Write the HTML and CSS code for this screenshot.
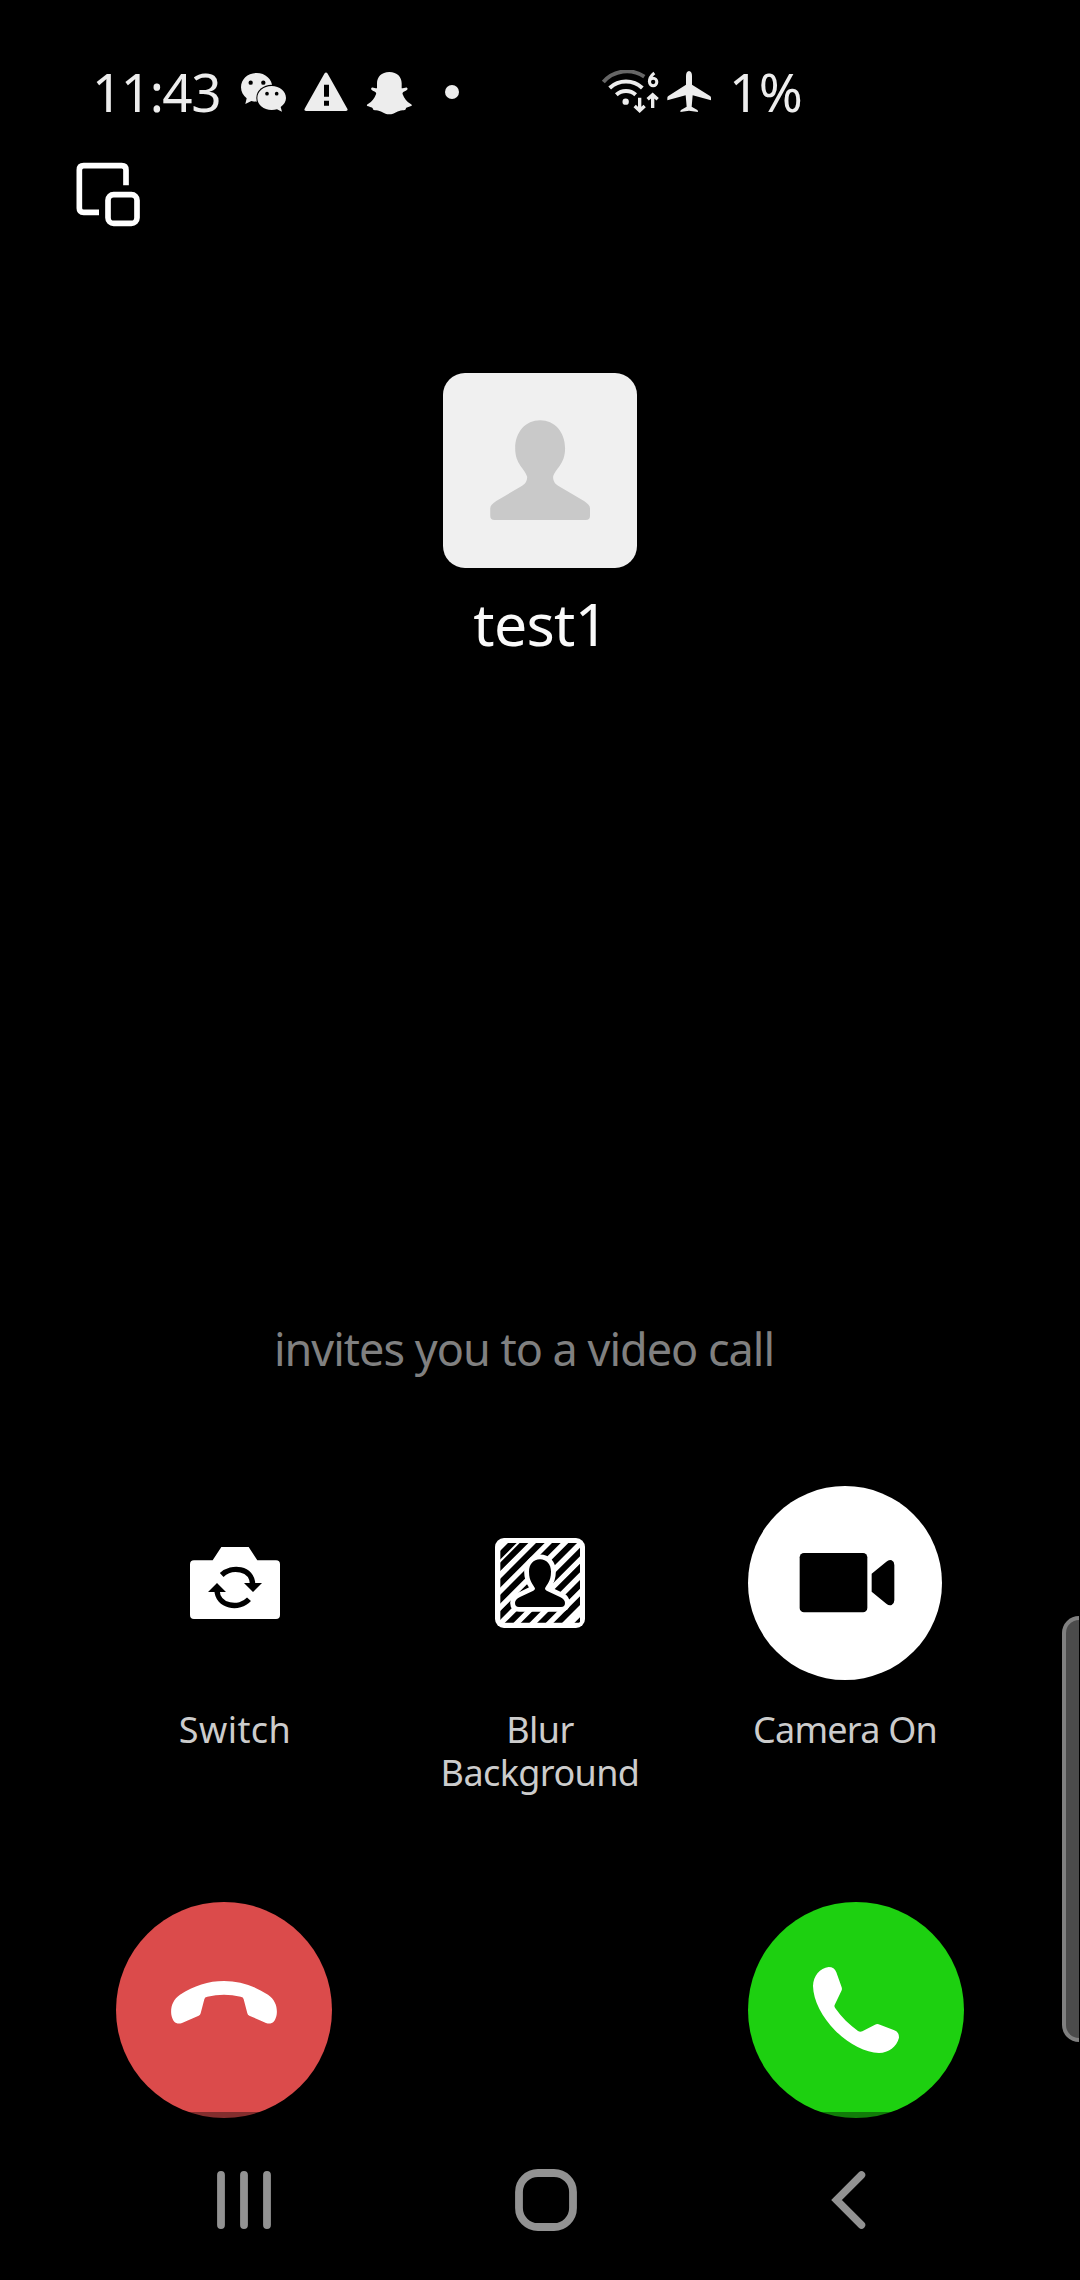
FILE: index.html
```html
<!DOCTYPE html>
<html lang="en">
<head>
<meta charset="utf-8">
<title>Video call</title>
<link rel="stylesheet" href="styles.css">
</head>
<body>
<div class="screen">
  <header class="status">
    <span class="clock">11:43</span>
    <svg class="chat" width="47" height="46" viewBox="540 60 141 138">
      <path fill="#ededed" d="M590 69c-27 0-47 19-47 43 0 14 7 25 17 33l-4 17 18-9c6 2 12 2 19 2 25-1 44-19 44-43s-21-43-47-43z"/>
      <ellipse cx="635" cy="144" rx="46" ry="40" fill="#000"/>
      <path fill="#ededed" d="M635 108c-24 0-43 16-43 36s19 36 43 36c6 0 11-1 16-2l15 7-4-14c10-7 16-16 16-27 0-20-19-36-43-36z"/>
      <g fill="#000"><circle cx="572" cy="98" r="6.500"/><circle cx="610" cy="98" r="6.500"/><circle cx="621" cy="131" r="5.500"/><circle cx="650" cy="131" r="5.500"/></g>
    </svg>
    <svg class="alert" width="44" height="46" viewBox="732 60 132 138">
      <path fill="#ededed" d="M793 71q5-7 10 0l59 105q3 7-4 7H738q-7 0-4-7z"/>
      <path fill="#000" d="M792 104h15v36h-15zM792 152h15v15h-15z"/>
    </svg>
    <svg class="ghost" width="46" height="46" viewBox="918 60 138 138">
      <path fill="#ededed" d="M988 66c-24 0-37 15-37 34v15c-6 0-12-4-16-2-4 4 0 8 5 10 6 2 10 5 8 10-5 13-12 22-23 28-6 3-6 6 0 8 5 3 11 2 13 6 1 4 2 6 7 6 17-2 25 12 43 12s26-14 43-12c5 0 6-2 7-6 2-4 8-3 13-6 6-2 6-5 0-8-11-6-18-15-23-28-2-5 2-8 8-10 5-2 9-6 5-10-4-2-10 2-16 2v-15c0-19-13-34-37-34z"/>
    </svg>
    <span class="more"></span>
    <svg class="wifi" width="58" height="46" viewBox="63 60 174 138">
      <g fill="none" stroke="#ededed" stroke-width="12">
        <path stroke="#666" d="M70 96A94 94 0 0 1 193 80"/>
        <path d="M89 114A72 72 0 0 1 187 114"/>
        <path d="M109 134A43 43 0 0 1 167 134"/>
        <path stroke-width="10" d="M179 143v38M164 168l15 14 15-14M218 174v-39M203 148l15-14 15 14"/>
        <path stroke-width="9" d="M223 69q-15 12-15 27"/>
        <circle cx="219.500" cy="96" r="11" stroke-width="9"/>
      </g>
      <circle cx="137" cy="155" r="9.500" fill="#ededed"/>
    </svg>
    <svg class="plane" width="44" height="46" viewBox="261 60 132 138">
      <path fill="#ededed" d="M327 63c6 0 9 7 9 15v26l54 34q3 2 3 5v8l-55-15-3 34 17 10q2 2 2 6l-27-4-26 4q0-4 2-6l17-10-3-34-55 15v-8q0-3 3-5l53-34V78c0-8 3-15 9-15z"/>
    </svg>
    <span class="battery">1%</span>
  </header>

  <svg class="minimize" width="66" height="66" viewBox="45 336 198 198" fill="none" stroke="#fff" stroke-width="17">
    <path d="M198 406V360Q198 347 185 347H71Q58 347 58 360V475Q58 487 71 487H117"/>
    <rect x="144" y="434" width="87" height="86" rx="17"/>
  </svg>

  <section class="caller">
    <svg class="avatar" viewBox="68 38 585 585">
      <path fill="#c9c9c9" d="M360 180c-43 0-75 35-75 84 0 49 29 60 36 86 0 15-7 22-15 27l-78 46q-18 12-18 22v22q0 13 13 13h274q13 0 13-13v-22q0-10-18-22l-78-46c-8-5-15-12-15-27 7-26 36-37 36-86 0-49-32-84-75-84z"/>
    </svg>
    <span class="name">test1</span>
  </section>

  <p class="invite">invites you to a video call</p>

  <section class="options">
    <div class="option">
      <div class="disc">
        <svg width="90" height="90" viewBox="90 84 270 270">
          <path fill="#fff" d="M102 151h56l26-40h82l26 40h56q12 0 12 12v152q0 12-12 12H102q-12 0-12-12V163q0-12 12-12z"/>
          <path fill="none" stroke="#000" stroke-width="16" d="M185 195C214 167 277 172 278 224M267 268C238 300 172 290 171 240"/>
          <path d="M252 219h54l-27 27zM144 246h54l-27-27z"/>
        </svg>
      </div>
      <span class="label switch">Switch</span>
    </div>
    <div class="option">
      <div class="disc">
        <svg width="90" height="90" viewBox="225 84 270 270">
          <clipPath id="frame"><rect x="241" y="99" width="239" height="239" rx="4"/></clipPath>
          <rect x="225" y="84" width="270" height="270" rx="27" fill="#fff"/>
          <g clip-path="url(#frame)">
            <path stroke="#000" stroke-width="18.500" d="M200 176L400-24M200 211L500-89M200 260L500-40M200 308L500 8M200 357L550 7M200 406L550 56M200 454L550 104M200 503L550 153M200 552L550 202M200 615L550 265"/>
            <path stroke="#fff" stroke-width="29" stroke-linejoin="round" d="M360 148c-20 0-33 15-33 37 0 30 13 38 18 50q0 5-5 7l-40 19q-15 7-15 18 0 12 12 12h126q12 0 12-12 0-11-15-18l-40-19q-5-2-5-7c5-12 18-20 18-50 0-22-13-37-33-37z"/>
            <path d="M360 148c-20 0-33 15-33 37 0 30 13 38 18 50q0 5-5 7l-40 19q-15 7-15 18 0 12 12 12h126q12 0 12-12 0-11-15-18l-40-19q-5-2-5-7c5-12 18-20 18-50 0-22-13-37-33-37z"/>
          </g>
        </svg>
      </div>
      <span class="label blur">Blur<br>Background</span>
    </div>
    <div class="option">
      <div class="disc on">
        <svg width="194" height="194" viewBox="55 49 582 582">
          <rect x="210" y="250" width="203" height="178" rx="13"/>
          <path d="M426 312L470 276Q478 269 486 272 494 276 494 286V392Q494 402 486 406 478 409 470 402L426 366z"/>
        </svg>
      </div>
      <span class="label camera">Camera On</span>
    </div>
  </section>

  <section class="calls">
    <div class="call decline">
      <svg width="216" height="216" viewBox="48 36 648 648">
        <path fill="#fff" d="M372 273C325 273 282 287 240 314 218 329 211 352 214 374 218 396 230 405 246 399L296 377Q301 375 302 370L313 328Q314 321 322 320 372 309 422 320 430 321 431 328L442 370Q443 375 448 377L498 399C514 405 526 396 530 374 533 352 526 329 504 314 462 287 419 273 372 273z"/>
      </svg>
    </div>
    <div class="call accept">
      <svg width="216" height="216" viewBox="54 36 648 648">
        <path fill="#fff" d="M296 231C270 235 250 256 249 288 250 332 276 382 316 422 356 462 405 487 447 489 476 488 500 470 507 443 507 430 502 424 491 420L446 403Q441 401 435 404L397 424Q390 427 384 423C358 405 335 382 316 355Q311 349 315 343L334 303Q337 298 335 292L319 247Q313 231 296 231z"/>
      </svg>
    </div>
  </section>

  <div class="edge-handle"></div>

  <nav class="navbar">
    <svg width="56" height="64" viewBox="216 2168 56 64" stroke="#929292" stroke-width="7.800" stroke-linecap="round"><path d="M221 2175v50M244 2175v50M267 2175v50"/></svg>
    <svg class="home" width="64" height="64" viewBox="514 2168 64 64"><rect x="519" y="2173" width="54" height="54" rx="19" fill="none" stroke="#929292" stroke-width="7.800"/></svg>
    <svg width="38" height="64" viewBox="829 2168 38 64" fill="none" stroke="#929292" stroke-width="7.500" stroke-linecap="round"><path d="M861.500 2175L836.500 2200L861.500 2225"/></svg>
  </nav>
</div>
</body>
</html>
```
FILE: styles.css
```css
body {
  margin: 0;
  background: #000;
}

.screen {
  position: relative;
  display: flex;
  flex-direction: column;
  box-sizing: border-box;
  width: 1080px;
  height: 2280px;
  padding-top: 65px;
  overflow: hidden;
  background: #000;
  color: #fafafa;
  font-family: "Noto Sans", "Open Sans", sans-serif;
}

svg {
  display: block;
  flex: none;
}

.status {
  display: flex;
  align-items: flex-start;
  height: 97px;
  padding-left: 92px;
  color: #ededed;
  font-size: 53px;
  line-height: 53px;
  white-space: nowrap;
}

.status svg { margin-top: 5px; }
.clock { width: 148px; letter-spacing: -1.5px; }
.alert { margin-left: 17px; }
.ghost { margin-left: 18px; }

.more {
  width: 14px;
  height: 14px;
  margin: 20px 0 0 33px;
  border-radius: 50%;
  background: #ededed;
}

.wifi { margin-left: 142px; }
.plane { margin-left: 8px; }
.battery { margin-left: 18px; letter-spacing: -0.5px; }
.minimize { margin-left: 75px; }

.caller {
  display: flex;
  flex-direction: column;
  align-items: center;
  height: 946px;
  margin-top: 145px;
}

.avatar {
  width: 194.6px;
  height: 194.6px;
  border-radius: 22px;
  background: #f0f0f0;
}

.name {
  margin-top: 23px;
  padding-left: 1px;
  font-size: 59px;
  line-height: 64px;
  letter-spacing: -0.7px;
}

.invite {
  margin: 0;
  padding-right: 32px;
  color: #808080;
  font-size: 45px;
  line-height: 60px;
  letter-spacing: -1px;
  text-align: center;
  white-space: nowrap;
}

.options {
  display: grid;
  grid-template-columns: repeat(3, 305px);
  justify-content: center;
  height: 416px;
  margin-top: 107px;
}

.option {
  display: flex;
  flex-direction: column;
  align-items: center;
}

.disc {
  display: grid;
  place-items: center;
  width: 194px;
  height: 194px;
  border-radius: 50%;
}

.disc.on { background: #fff; }

.label {
  margin-top: 28px;
  color: #ccc;
  font-size: 36px;
  line-height: 43px;
  text-align: center;
  white-space: nowrap;
}

.switch { letter-spacing: 0.4px; }
.blur { letter-spacing: -0.6px; }
.camera { letter-spacing: -0.8px; }

.calls {
  display: flex;
  justify-content: space-between;
  padding: 0 116px;
}

.call {
  width: 216px;
  height: 216px;
  border-radius: 50%;
}

.decline { background: #db4b4b; }
.accept { background: #1dd010; }

.edge-handle {
  position: absolute;
  top: 1616px;
  right: 1px;
  box-sizing: border-box;
  width: 17px;
  height: 426px;
  border: 4px solid #808080;
  border-right: 0;
  border-radius: 17px 0 0 17px;
  background: #4b4b4b;
}

.navbar {
  position: absolute;
  inset: auto 0 0;
  display: flex;
  align-items: center;
  justify-content: space-between;
  box-sizing: border-box;
  height: 168px;
  padding: 8px 213px 0 216px;
  background: rgba(0, 0, 0, 0.4);
}

.home { margin-right: 9px; }
```
